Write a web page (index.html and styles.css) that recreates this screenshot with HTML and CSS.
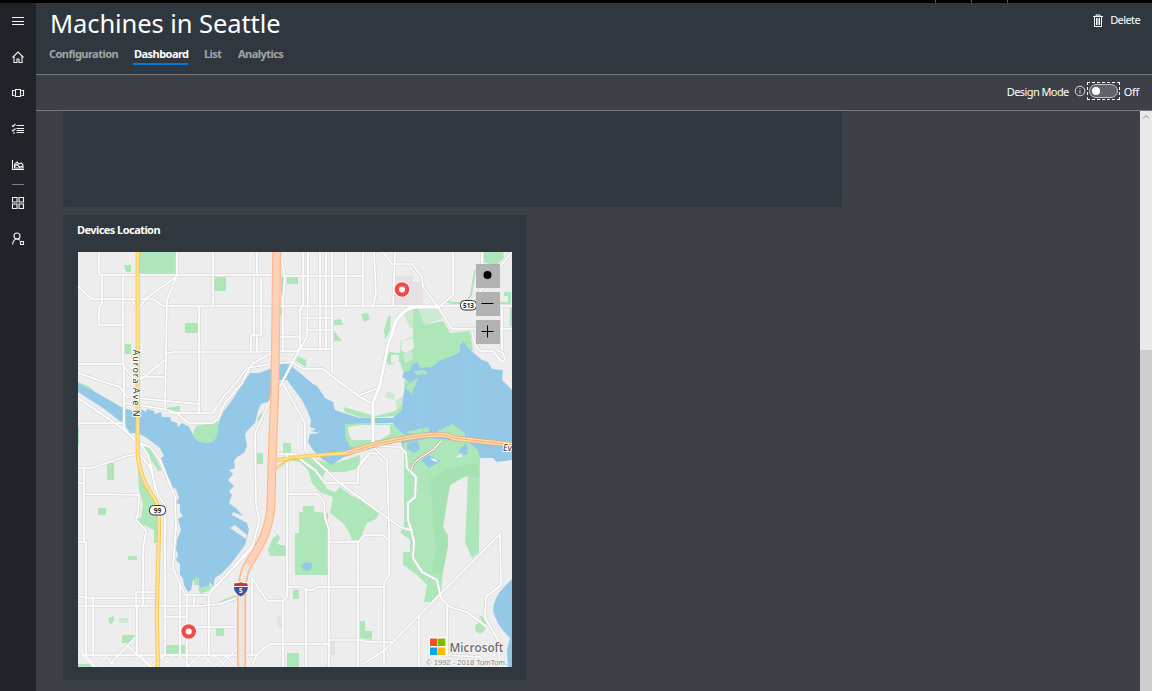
FILE: index.html
```html
<!DOCTYPE html>
<html lang="en">
<head>
<meta charset="utf-8">
<title>Machines in Seattle</title>
<link rel="stylesheet" href="styles.css">
</head>
<body>
<div class="app">
  <div class="topbar"><i></i><i></i><i></i></div>
  <div class="shell">
    <nav class="rail">
      <svg class="ico" viewBox="0 0 14 14"><path d="M1 3.500h12M1 7.500h12M1 10.500h12"/></svg>
      <svg class="ico" viewBox="0 0 14 14"><path d="M1.500 7.500L7 2l5.500 5.500M3 6.500v6h3V9h2v3.500h3v-6"/></svg>
      <svg class="ico" viewBox="0 0 14 14"><path d="M4.500 3.500h5v7h-5zM3.500 4.500h-2v5h2M10.500 4.500h2v5h-2"/></svg>
      <svg class="ico" viewBox="0 0 14 14"><path d="M5.500 3.500H13M5.500 6.500H13M5.500 8.500H13M5.500 10.500H13M1 3.500l1 1L4.500 2M1 8l1 1 2.500-2.500M2 11h2"/></svg>
      <svg class="ico" viewBox="0 0 14 14"><path d="M1.500 2v9.500H13M3.500 10V6.500L6 4l2 2 2.500-1L12 7v3zM4 8l2-1.500L8.500 9 12 8"/></svg>
      <span class="divider"></span>
      <svg class="ico grid-ico" viewBox="0 0 14 14"><path d="M1.500 1.500h4.500v4.500h-4.500zM8 1.500h4.500v4.500H8zM1.500 8h4.500v4.500h-4.500zM8 8h4.500v4.500H8z"/></svg>
      <svg class="ico user-ico" viewBox="0 0 14 14"><circle cx="6" cy="4" r="3"/><path d="M1.500 12.500C2 9.500 3.500 7 6 7c1.500 0 2.500.7 3 1.500M9.500 9.500h3v3h-3z"/></svg>
    </nav>
    <main class="main">
      <header class="head">
        <div class="head-left">
          <h1>Machines in Seattle</h1>
          <div class="tabs">
            <a class="tab t-config">Configuration</a><a class="tab t-dash active">Dashboard</a><a class="tab t-list">List</a><a class="tab t-an">Analytics</a>
          </div>
        </div>
        <div class="delete">
          <svg viewBox="0 0 12 14"><path d="M1 2.500h10M4 2.500V1h4v1.500M2.500 3v9.500h7V3M4.500 4v7M6 4v7M7.500 4v7"/></svg>
          <span>Delete</span>
        </div>
      </header>
      <div class="design">
        <span class="design-label">Design Mode</span>
        <svg class="info" viewBox="0 0 12 12"><circle cx="6" cy="6" r="4.800"/><path d="M6 5.200v3.500M6 3.200v1"/></svg>
        <span class="toggle"><span class="pill"><span class="knob"></span></span></span>
        <span class="off">Off</span>
      </div>
      <div class="body">
        <div class="canvas">
          <section class="card blank"></section>
          <section class="card devices">
            <h2>Devices Location</h2>
            <svg class="map" viewBox="78 252 434 415">
              <defs>
                <g id="roads">
                  <path d="M99 252V272L102 276V303L99 308V325H123M102 275H272M283 276H362M78 286L87 295L93 299H153L163 306H272L278 306H512M123 275V365L133 378M177 252V275L167 300L165 410M176 277L146 298L139 309L131 299M213 252V305M199 306V413M165 354L173 352H258L280 351H298M78 364H123M78 373L113 385L120 387L127 397L198 404M165 360L140 380M140 377H165"/>
                  <path d="M124 365V430L137 442L150 447L160 460L175 497L176 530M78 398L125 430L138 443M78 423H123M125 403L163 409L177 413L188 423H213L218 419L225 403L243 382M165 413H213L224 396L235 384L247 368L277 363L292 362L303 369H323L337 380L360 397L373 404M243 380L252 364L272 353M78 468H92L127 456L138 454M84 468V541M78 542H86V655M78 483H84M84 494L139 495L138 513L136 520L146 531L143 549V605M140 455L150 467L158 495L165 505V655M140 443L148 455L152 470L155 490"/>
                  <path d="M176 525L173 568L185 595H208L222 580L253 545L258 525M136 592H157M136 592V606M78 596L86 598H156M78 606H200L220 604L237 598M93 598V655M137 606V655M82 655H257M135 638L110 664M180 585V655M187 596V667M194 596V605M209 596V655M165 617H187M195 627H237M210 592L248 553L258 543"/>
                  <path d="M252 578L267 601H283L287 597V453M283 601V667M252 578V655M288 587H302L307 590H313L318 587H384M306 590V667M252 665L258 653L270 644H328M329 528V667M329 542H358V667M329 640H360L366 642H392M389 525V575L384 583V667M358 542L365 535H383L389 541M363 664L385 650L500 534L501 585L486 597L485 618L498 640L500 667M419 616V667M410 525L414 542L413 558L422 572L437 580L441 598L450 607L467 612L487 627M447 605V655L480 657L486 667"/>
                  <path d="M360 395L376 389M373 446L400 447L406 453L407 468L416 477L415 497L408 503V520L411 530M360 463L370 453L378 454M374 448L387 460L388 493L389 530M360 498L400 527L410 530M282 382L305 423V450L317 462L340 483L360 498M255 433L256 503L259 520L258 530M280 380L255 433M278 454H295L305 463L315 470L325 483H358V468L370 453M288 494H318L324 502L325 517L329 530"/>
                  <path d="M257 252V275M254 277V335M261 277V335H251V352M257 336V352M303 252V305L300 310V350M308 252V292L307 337L298 352L278 390M320 252V348M326 252V348M332 252V372M346 252V306M302 318H332M308 330H332M298 349H332M279 337H300M282 262L285 278L283 300V352M363 252V306M374 252L376 293L373 306M395 252L393 306M383 252L392 264H412L422 277L423 287L438 307L452 329H512M453 252V295L440 306M512 252L483 288L470 303M482 252V265M472 332L475 345L480 351H493L502 362L505 360L503 353L497 350M502 307V350"/>
                </g>
                <path id="lanes" d="M78 648L96 667M82 655L94 667M92 655L104 667M104 655L116 667M128 646L150 667M116 656L127 667M140 655L152 667M165 655L150 667M174 655L162 667M160 655L172 667M178 655L190 667M200 655L188 667M203 655L215 667M214 655L202 667M214 655L226 667M227 655L215 667M225 655L237 667M237 648L220 667"/>
                <path id="i5" d="M276.700 250L275 385L272 463L271 503C270 535 255 552 248 565"/>
                <path id="i5s" d="M248 565Q242 574 241.500 600L241.500 669"/>
                <path id="sr99" d="M137.700 250V455Q139 468 145 483L157 503Q159 510 159 530L156.700 615L158 669"/>
                <path id="sr520" d="M347 453L360 449Q380 442 413 437T453 438L514 445"/>
              </defs>
              <rect x="78" y="252" width="434" height="415" fill="#ededed"/>
              <path class="hosp" d="M395 276H413V282H423V306H394ZM277 617h5v10h-5zM330 641h5v14h-5z"/>
              <g class="park">
                <path d="M139 252H177V274H139ZM124 265h7v7h-5zM185 323h13v10h-13zM125 344h6v10h-6zM214 277h12v14h-12zM287 277h11v7h-11zM281 277h2v18h-2zM280 307h2v8h-2zM334 320L341 319L343 325H334ZM334 331L342 341H334ZM298 356L306 360V367L296 361ZM257 453h6v11h-6zM283 443h8v10h-8zM256 421L260 414L264 413L262 419ZM107 463h7v17h-7zM98 508h8v7h-8zM165 408L180 406V411L170 412ZM78 427h1v18h-1z"/>
                <path d="M138 468L144 483L152 497L157 510V543H154V530L137 522V518L141 518L143 504L139 490ZM143 445L150 448L162 470L158 471L150 458ZM128 556h9v4h-9zM108 618l6-2v5l-4 4zM122 635h13l-4 8h-9zM166 645h19v9h-19zM216 628h8v8h-8zM293 590h6v9h-6zM287 653h12v14h-12zM78 664h16v3h-16z"/>
                <path d="M299 512H303V506H314V512L328 513V575H295V533H299ZM270 556L268 550L273 538L278 534L280 538L277 544L286 546V556ZM278 471L284 462L300 457L318 460L332 464L345 460L360 455V468L345 472L325 472L322 480L327 489L335 492L340 487L352 496L364 501L373 508L380 512L376 519L367 523L363 532L360 540L352 540L349 532L343 523L330 513L333 497L320 492L312 483L308 470L300 462L288 460Z"/>
                <path d="M360 621H365V631H372V640L360 638ZM478 615L485 618L487 628ZM484 252H503L504 258L495 266L484 262ZM504 292H511V304H498V302H508V296H504ZM510 308h2v18h-2zM361 314L368 313L370 319L364 322ZM388 317L391 315L390 330L385 340L384 330Z"/>
                <circle cx="480" cy="628" r="5"/>
              </g>
              <path class="park-light" d="M402 310L437 306L443 318L422 326L410 329ZM119 618h9v5h-9z"/>
              <path class="park" d="M413 308L418 308L424 325L443 321L450 333L470 331L473 350L450 362L430 370L416 382L412 398L406 404L400 416L362 418L345 412L343 407L375 416L395 411L403 397L405 378L400 362L388 365L386 357L390 352L400 353L401 341L413 337Z"/>
              <path class="hole" d="M402 341L413 338L414 348L406 353L401 350ZM391 355h8v8h-8z"/>
              <path class="park-light" d="M403 354L412 350L413 359L405 363Z"/>
              <path class="hole" d="M378 382L402 368L404 396L396 410L374 414Z"/>
              <path class="park-light" d="M387 391l8 3-1 6-9-3zM395 401l8-5v8l-6 5z"/>
              <g class="water">
                <path d="M78 382L90 389L123 408L138 412L141 409L146 412L147 409L154 411L155 414L161 412L162 417L170 417L171 421L177 423L178 427L182 423L189 427L193 435Q204 444 214 440L219 422L223 412L230 403L238 391L242 385L250 373L259 373L270 369L283 363L290 365L300 373L313 384L317 386L325 398L333 402L335 410L350 415L360 418H393L402 410L403 397L406 385L410 382L402 377L404 372L410 371L412 364L418 362L420 368L432 367L439 361L450 357L460 352L460 345L464 342L468 348L475 354L482 360L488 362L492 369L503 370L502 380L512 390V460L497 462L493 458H480L470 453L405 452L393 423L347 424V435L355 445L357 452L342 458L332 465L323 460L313 450L308 442L310 434L320 433L311 431L316 429L310 427L311 420L307 410L302 400L293 388L287 380L281 381L270 401L261 404L258 411L255 423L247 431L245 434L247 446L244 453L237 457L234 461L235 468L229 470L233 474L228 480L234 486L229 491L232 495L229 503L237 509L243 516L233 512L232 515L247 523L249 530L245 545L239 553L230 565L221 574L215 578L213 587L210 582L208 589L200 590L198 580H193L191 590L188 592L184 585L183 578L180 575V564L176 560L178 555L176 549L177 540L181 530L178 519L183 516L180 512V504L176 503L179 498L176 489L172 487L170 480L166 475L163 463L161 458L164 456L160 448L147 438L138 433H130L125 425L103 408L78 392Z"/>
                <path d="M512 579L503 588Q494 598 493 610Q496 625 510 638L507 650L508 667H512ZM301 566L306 562L312 563L311 569L307 571L303 569Z"/>
              </g>
              <path class="hole" d="M230 528L246 539L247 535L235 525Z"/>
              <g class="park">
                <path d="M78 382L88 386L97 393L78 383ZM193 433L196 426L218 421Q220 440 210 443Q198 444 193 436ZM194 578h5v7h-5zM198 588L212 585L210 590L200 594ZM345 424H393L401 432L410 438H400L380 443L365 448L350 447L345 437ZM405 432L428 427L430 431L415 435ZM413 371L425 370L428 374L417 375ZM408 384L418 378L415 387L411 394L406 388ZM435 433L452 424L465 433V439L435 437ZM220 601L236 595L237 598L220 604Z"/>
                <path d="M404 443L430 438L468 442L478 450L480 458L479 552L472 558L465 542L466 523L467 497L468 476L458 479L448 487L446 503L443 527L448 535V547L443 572L441 592L432 602H424L427 585L417 575L403 565V552H410V540L400 532L404 528Z"/>
              </g>
              <path class="park-dark" d="M430 478L450 468L478 463L479 478L466 476L450 485L443 527L448 545L442 573H432L436 550Z"/>
              <path class="hole" d="M348 427L362 425H390V434L380 440L352 440L349 435Z"/>
              <path class="water" d="M407 443L418 441L420 449L414 453L407 449ZM421 460L429 455L441 461L434 465L429 468ZM460 449L466 443L468 449L467 455L459 454Z"/>
              <path class="hole" d="M430 458l6 1 2 3-5-1zM455 458l6-5 1 4z"/>
              <path class="ferry" d="M423.500 372V436M467.500 348V440"/>
              <path class="greenway" d="M475 270L471 295L465 303H453L444 301"/>
              <use href="#lanes" class="casing thin"/>
              <use href="#roads" class="casing"/>
              <path class="casing big" d="M440 307H415Q398 310 393 330L388 345L380 385L373 403V446"/>
              <use href="#lanes" class="road thin-in"/>
              <use href="#roads" class="road"/>
              <path class="road big" d="M440 307H415Q398 310 393 330L388 345L380 385L373 403V446"/>
              <path class="ramp" d="M411 470Q414 460 425 455L434 449L441 441"/>
              <path class="ramp-in" d="M411 470Q414 460 425 455L434 449L441 441"/>
              <path class="y-case" d="M277 460L307 456L347 453"/>
              <path class="y-fill" d="M277 460L307 456L347 453"/>
              <path class="y-ramp" d="M276 469Q282 461 296 458"/>
              <use href="#sr520" class="b-case"/><use href="#sr520" class="b-fill"/><use href="#sr520" class="b-mid"/>
              <use href="#sr99" class="y99-case"/><use href="#sr99" class="y99-fill"/>
              <use href="#i5s" class="i5s-case"/><use href="#i5s" class="i5s-mid"/><use href="#i5s" class="i5s-fill"/>
              <use href="#i5" class="i5-case"/><use href="#i5" class="i5-fill"/>
              <path class="i5-gap" d="M245 571L242 578"/>
              <text class="street" transform="translate(133.200 349.500) rotate(90)" textLength="67">Aurora Ave N</text>
              <text class="street ital" x="503" y="451" textLength="9">Ev</text>
              <g class="shield">
                <rect x="149.500" y="505.500" width="16" height="9.500" rx="4"/><text x="157.500" y="512.800">99</text>
                <rect x="460.500" y="300.500" width="16" height="9.500" rx="4"/><text x="463" y="307.800" textLength="11" lengthAdjust="spacingAndGlyphs" class="start">513</text>
              </g>
              <path fill="#fff" d="M233.500 582Q237 583 240.800 581Q244.500 583 248 582Q249 592 240.800 597Q232.500 592 233.500 582Z"/>
              <path fill="#cf3039" d="M234.500 583Q237 584 240.800 582.300Q244.500 584 247 583L248 586H233.800Z"/>
              <path fill="#3d4fa8" d="M233.800 587H248Q247.500 593 240.800 596.500Q234 593 233.800 587Z"/>
              <text class="five" x="240.800" y="593">5</text>
              <g class="pin"><circle class="halo" cx="402" cy="289.500" r="8"/><circle class="halo" cx="188.700" cy="631.500" r="8"/><circle cx="402" cy="289.500" r="5.200"/><circle cx="188.700" cy="631.500" r="5.200"/></g>
              <g class="ctl"><path d="M476 264h24v24h-24zM476 292h24v24h-24zM476 320h24v24h-24z"/></g>
              <circle cx="487.500" cy="275" r="4"/>
              <path class="ctl-line" d="M481.500 303.500h12M481.500 331.500h12M487.500 325.500v12"/>
              <path fill="#fff" d="M429 637h17.500v19h-17.500z" opacity=".8"/>
              <path fill="#f25022" d="M430 638.500h7.300v7.500H430z"/><path fill="#7fba00" d="M438 638.500h7.300v7.500H438z"/>
              <path fill="#00a4ef" d="M430 647.500h7.300v7.500H430z"/><path fill="#ffb900" d="M438 647.500h7.300v7.500H438z"/>
              <text class="ms" x="449.500" y="651.500" textLength="54" lengthAdjust="spacingAndGlyphs">Microsoft</text>
              <text class="copy" x="426" y="664.500" textLength="81" lengthAdjust="spacingAndGlyphs">© 1992 - 2018 TomTom.</text>
            </svg>
          </section>
        </div>
        <div class="scroll"><svg viewBox="0 0 12 12"><path d="M3 7.500L6 4.500l3 3"/></svg><div class="thumb"></div></div>
      </div>
    </main>
  </div>
</div>
</body>
</html>
```

FILE: styles.css
```css
* { box-sizing: border-box; }
body { margin: 0; overflow: hidden; font-family: "Noto Sans", "Open Sans", sans-serif; color: #fff; background: #3e4047; }
.app { display: flex; flex-direction: column; width: 1152px; height: 691px; }
.topbar { height: 3px; background: #000; display: flex; justify-content: flex-end; gap: 35px; padding-right: 144px; }
.topbar i { width: 1px; background: #555; }
.shell { flex: 1; display: flex; min-height: 0; }

.rail { width: 36px; background: #202327; display: flex; flex-direction: column; align-items: center; padding-top: 11px; }
.ico { width: 14px; height: 14px; margin-bottom: 22px; fill: none; stroke: #f4f4f4; stroke-width: 1.100; flex: none; }
.divider { width: 12px; height: 1px; background: #7d8082; margin-top: -10px; margin-bottom: 11px; }
.user-ico { margin-top: 0; }

.main { flex: 1; display: flex; flex-direction: column; min-width: 0; }
.head { height: 72px; background: #30373f; border-bottom: 1px solid #777a7b; display: flex; justify-content: space-between; }
.head-left { padding-left: 13px; }
h1 { margin: 0; padding: 1px 0 0 1px; font-weight: 400; font-size: 25.500px; line-height: 38px; height: 42px; letter-spacing: -.08px; white-space: nowrap; }
.tabs { display: flex; gap: 16px; height: 20px; }
.tab { font-size: 11px; font-weight: 700; line-height: 17px; color: #a3a6a9; white-space: nowrap; letter-spacing: -.54px; height: 20px; }
.t-config { width: 68px; }
.t-dash { width: 55px; padding-left: 1px; }
.t-list { width: 18px; }
.tab.active { color: #fff; border-bottom: 2px solid #0078d7; }
.delete { display: flex; gap: 6px; height: 18px; margin-top: 8px; padding-right: 12px; font-size: 11px; line-height: 18px; letter-spacing: -.6px; }
.delete svg { width: 12px; height: 14px; margin-top: 3px; fill: none; stroke: #fff; }

.design { height: 36px; border-bottom: 1px solid #777a7b; display: flex; justify-content: flex-end; align-items: center; padding-right: 13px; font-size: 11px; background: #3e4047; }
.design-label { letter-spacing: -.58px; margin-right: 5px; white-space: nowrap; padding-bottom: 2px; }
.info { width: 12px; height: 12px; fill: none; stroke: #ddd; margin-top: -4px; margin-right: 1px; }
.toggle { width: 33px; height: 18px; border: 1px dashed #fff; padding: 1px; margin-right: 4px; margin-top: -4px; }
.pill { display: flex; align-items: center; width: 29px; height: 14px; border: 1px solid #c4c4c4; border-radius: 8px; background: #606368; padding-left: 2px; }
.knob { width: 8px; height: 8px; border-radius: 50%; background: #fff; }
.off { letter-spacing: -.3px; padding-bottom: 3px; }

.body { flex: 1; display: flex; min-height: 0; }
.canvas { flex: 1; display: flex; flex-direction: column; gap: 8px; padding-left: 27px; overflow: hidden; }
.card { background: #31373e; border-radius: 0 0 2px 2px; flex: none; }
.blank { width: 779px; height: 96px; }
.devices { width: 464px; height: 465px; padding: 7px 15px 0; }
h2 { margin: 0 0 0 -1px; font-size: 11px; line-height: 16px; height: 30px; font-weight: 700; letter-spacing: -.56px; }
.scroll { width: 12px; background: #e9e9e9; display: flex; flex-direction: column; justify-content: space-between; }
.scroll svg { width: 12px; height: 12px; fill: none; stroke: #888; }
.thumb { height: 341px; background: #cdcdcd; }

.map { display: block; width: 434px; height: 415px; overflow: hidden; }
.park { fill: #ace6b9; }
.park-light { fill: #cce9d3; }
.park-dark { fill: #a5e1b1; }
.hole { fill: #ededed; }
.hosp { fill: #e8e1e4; }
.water { fill: #93c8e6; }
.ferry { fill: none; stroke: #86d0fb; stroke-width: .8; }
.greenway { fill: none; stroke: #ace6b9; stroke-width: 1.800; }
.casing { fill: none; stroke: #d8d8d8; stroke-width: 3.100; }
.road { fill: none; stroke: #fff; stroke-width: 1.700; }
.casing.thin { stroke-width: 2.400; }
.road.thin-in { stroke-width: 1.200; }
.casing.big { stroke-width: 4; }
.road.big { stroke-width: 2.800; }
.ramp { fill: none; stroke: #c99f98; stroke-width: 2.600; }
.ramp-in { fill: none; stroke: #fff; stroke-width: 1.300; }
.y-case { fill: none; stroke: #fdc94f; stroke-width: 4; }
.y-fill { fill: none; stroke: #ffe09c; stroke-width: 2; }
.y-ramp { fill: none; stroke: #fdc94f; stroke-width: 1.600; }
.b-case { fill: none; stroke: #dea79e; stroke-width: 5.600; }
.b-fill { fill: none; stroke: #ffdc9a; stroke-width: 4; }
.b-mid { fill: none; stroke: #e9a27d; stroke-width: .8; }
.y99-case { fill: none; stroke: #ffc94e; stroke-width: 4.200; }
.y99-fill { fill: none; stroke: #ffe3a6; stroke-width: 2; }
.i5-case { fill: none; stroke: #ffb78f; stroke-width: 9; }
.i5-fill { fill: none; stroke: #ffd1b6; stroke-width: 6.600; }
.i5s-case { fill: none; stroke: #ffb78f; stroke-width: 9; }
.i5s-mid { fill: none; stroke: #ffd9c4; stroke-width: 6; }
.i5s-fill { fill: none; stroke: #e9e6e6; stroke-width: 4.400; }
.i5-gap { fill: none; stroke: #ededed; stroke-width: 3; }
.street { font: 9px "Noto Sans", sans-serif; fill: #333; stroke: #fff; stroke-width: 2px; paint-order: stroke; }
.ital { font-style: italic; }
.shield rect { fill: #fff; stroke: #333; stroke-width: 1; }
.shield text { font: bold 6.500px "Noto Sans", sans-serif; text-anchor: middle; fill: #222; }
.shield .start { text-anchor: start; }
.five { font: bold 6.500px "Noto Sans", sans-serif; text-anchor: middle; fill: #fff; }
.pin circle { fill: #fff; stroke: #ef4c4c; stroke-width: 4.300; }
.pin .halo { stroke: none; }
.ctl path { fill: #aaa; fill-opacity: .88; }
.ctl-line { fill: none; stroke: #000; stroke-width: 1; }
.ms { font: 600 13px "Open Sans", sans-serif; fill: #6d6d6d; stroke: #fff; stroke-width: 1px; paint-order: stroke; }
.copy { font: 8px "Liberation Sans", sans-serif; fill: #777; stroke: #fff; stroke-width: 1px; paint-order: stroke; }
```
